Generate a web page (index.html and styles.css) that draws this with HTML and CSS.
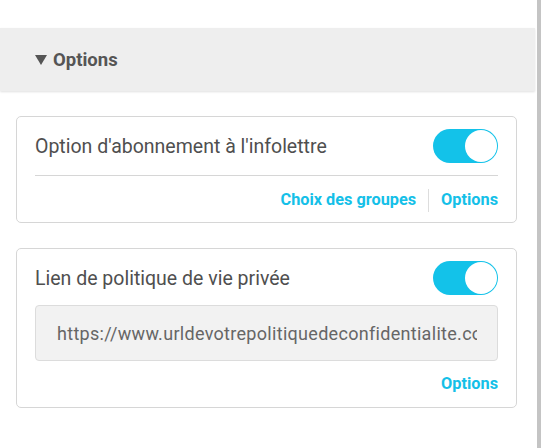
FILE: index.html
```html
<!DOCTYPE html>
<html lang="fr">
<head>
<meta charset="utf-8">
<title>Options</title>
<link rel="stylesheet" href="styles.css">
</head>
<body>
<div class="page">
  <div class="main">
    <div class="top-space"></div>
    <div class="section-head">
      <span class="caret"></span>
      <span class="section-title">Options</span>
    </div>
    <div class="content">
      <div class="card card-1">
        <div class="row">
          <span class="label">Option d'abonnement à l'infolettre</span>
          <span class="toggle"><span class="knob"></span></span>
        </div>
        <div class="divider"></div>
        <div class="links">
          <a class="link">Choix des groupes</a>
          <span class="sep"></span>
          <a class="link">Options</a>
        </div>
      </div>
      <div class="card card-2">
        <div class="row">
          <span class="label">Lien de politique de vie privée</span>
          <span class="toggle"><span class="knob"></span></span>
        </div>
        <div class="field"><div class="field-text">https://www.urldevotrepolitiquedeconfidentialite.com</div></div>
        <div class="links links-2">
          <a class="link">Options</a>
        </div>
      </div>
    </div>
  </div>
  <div class="gutter"></div>
  <div class="scrollbar"></div>
</div>
</body>
</html>
```

FILE: styles.css
```css
html, body {
  margin: 0;
  padding: 0;
  background: #ffffff;
}
body {
  font-family: Roboto, "Liberation Sans", sans-serif;
  color: #4f4f4f;
}
.page {
  display: flex;
  height: 448px;
  overflow: hidden;
}
.main {
  width: 535px;
  flex: none;
}
.gutter {
  width: 2px;
  flex: none;
}
.scrollbar {
  width: 4px;
  flex: none;
  background: #c4c4c4;
}
.top-space {
  height: 28px;
}
.section-head {
  height: 63px;
  background: #eeeeee;
  box-shadow: 0 1px 2px rgba(0, 0, 0, 0.12);
  display: flex;
  align-items: center;
  padding-left: 35px;
  gap: 6px;
}
.caret {
  width: 0;
  height: 0;
  border-left: 6px solid transparent;
  border-right: 6px solid transparent;
  border-top: 10px solid #555555;
  margin-top: 1px;
}
.section-title {
  font-size: 18.5px;
  font-weight: 700;
  color: #555555;
}
.content {
  padding: 25px 18px 0 16px;
  display: flex;
  flex-direction: column;
  gap: 25px;
}
.card {
  border: 1px solid #d6d6d6;
  border-radius: 5px;
  padding: 12px 18px 12px;
}
.card-1 {
  padding-bottom: 10px;
}
.card-2 {
  padding-bottom: 11px;
}
.row {
  display: flex;
  justify-content: space-between;
  align-items: center;
  height: 34px;
}
.label {
  font-size: 19.5px;
  color: #4f4f4f;
}
.toggle {
  width: 65px;
  height: 34px;
  border-radius: 17px;
  background: #13c2e9;
  display: flex;
  justify-content: flex-end;
  align-items: center;
  box-sizing: border-box;
  padding-right: 1px;
}
.knob {
  width: 32px;
  height: 32px;
  border-radius: 50%;
  background: #ffffff;
}
.divider {
  margin-top: 12px;
  border-top: 1px solid #d6d6d6;
}
.links {
  margin-top: 12px;
  height: 24px;
  display: flex;
  justify-content: flex-end;
  align-items: center;
}
.card .links-2 {
  margin-top: 11px;
}
.link {
  font-size: 16.3px;
  font-weight: 700;
  color: #14c0e8;
  line-height: 24px;
  cursor: pointer;
}
.sep {
  width: 1px;
  height: 23px;
  background: #dddddd;
  margin: 0 12px;
}
.field {
  margin-top: 10px;
  height: 56px;
  box-sizing: border-box;
  border: 1px solid #dcdcdc;
  border-radius: 4px;
  background: #f2f2f2;
  padding: 0 20px 0 21px;
  display: flex;
  align-items: center;
}
.field-text {
  font-size: 18px;
  letter-spacing: 0.3px;
  color: #666666;
  white-space: nowrap;
  overflow: hidden;
  width: 100%;
}
```
